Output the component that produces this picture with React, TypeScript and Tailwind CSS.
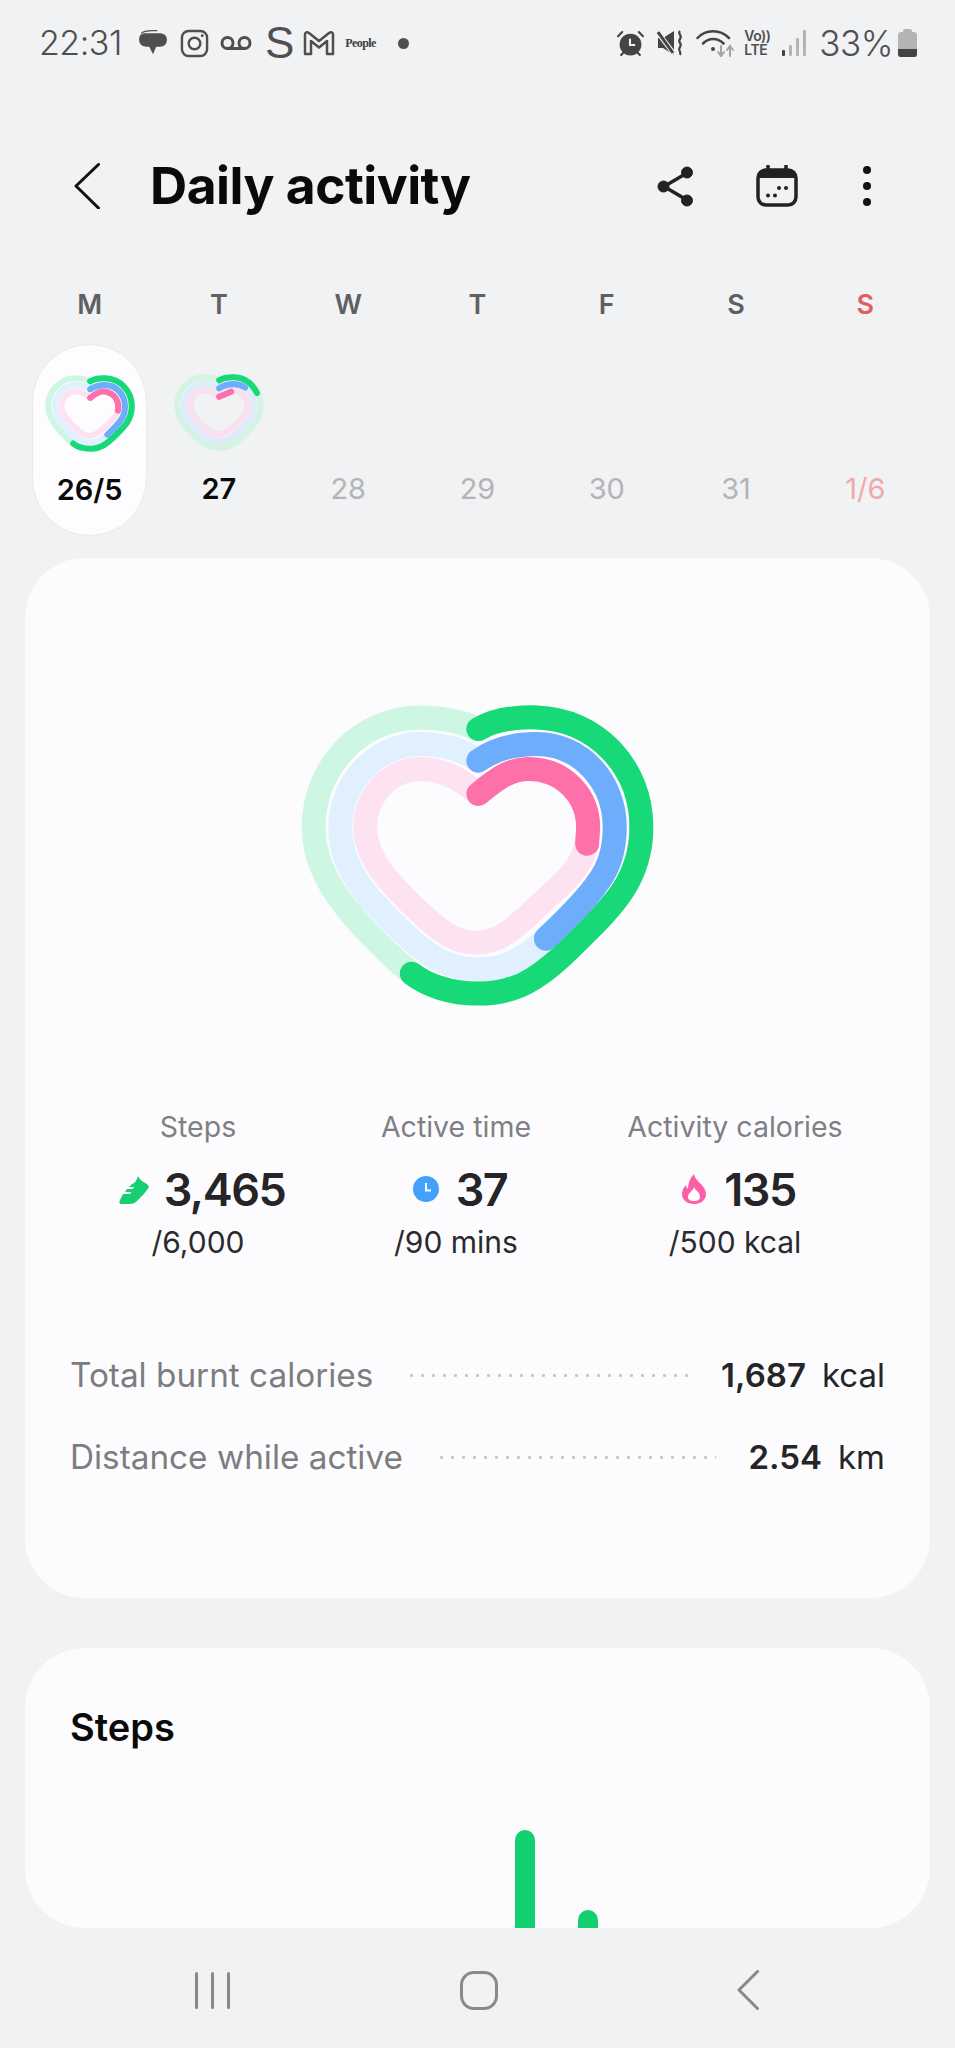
const INTER = "font-['Inter','Noto_Sans',sans-serif]";

const GREEN_TRACK =
  "M595 150C650 118 710 113 770 115C950 120 1085 265 1085 445C1085 520 1065 580 1028 637C990 695 930 750 875 805C840 840 800 875 760 900C710 932 650 945 595 945C510 945 440 920 395 885C340 840 270 770 225 720C165 650 100 560 100 445C100 265 240 115 420 115C480 115 540 125 595 150";
const BLUE_TRACK =
  "M595 245C650 205 710 195 770 195C905 195 1005 310 1005 445C1005 520 985 570 955 610C915 670 850 730 798 780C730 845 670 872 595 872C510 872 450 835 395 785C350 745 310 705 270 660C215 590 180 530 180 445C180 310 290 195 420 195C490 195 545 210 595 245";
const PINK_TRACK =
  "M595 345C650 300 690 270 745 270C850 270 925 350 925 445C925 495 915 530 890 565C860 610 800 655 745 710C690 760 650 792 590 792C530 792 490 765 440 720C395 680 365 650 335 615C290 565 255 510 255 445C255 350 330 270 420 270C490 270 540 300 595 345";

const FULL = {
  green:
    "M595 150C650 118 710 113 770 115C950 120 1085 265 1085 445C1085 520 1065 580 1028 637C990 695 930 750 875 805C840 840 800 875 760 900C710 932 650 945 595 945C510 945 440 920 395 885",
  blue: "M595 245C650 205 710 195 770 195C905 195 1005 310 1005 445C1005 520 985 570 955 610C915 670 850 730 798 780",
  pink: "M595 345C650 300 690 270 745 270C850 270 925 350 925 445L922 495",
};

const SHORT = {
  green: "M595 150C650 118 710 113 770 115C880 118 980 180 1040 300",
  blue: "M595 245C650 205 710 195 770 195C815 195 860 208 900 235",
  pink: "M595 345L735 285",
};

const Heart = ({
  progress,
  className,
  faded,
}: {
  progress: { green: string; blue: string; pink: string };
  className: string;
  faded?: boolean;
}) => (
  <svg viewBox="50 60 1085 940" className={className} fill="none" strokeLinecap="round" strokeWidth="72">
    <path d={GREEN_TRACK} stroke={faded ? "#d3f3e3" : "#cdf7e3"} />
    <path d={BLUE_TRACK} stroke={faded ? "#dfeafa" : "#e0f0fe"} />
    <path d={PINK_TRACK} stroke={faded ? "#f8e0ee" : "#fde3f2"} />
    <path d={progress.green} stroke="#18d977" />
    <path d={progress.blue} stroke="#6dadfb" />
    <path d={progress.pink} stroke="#fe70a9" />
  </svg>
);

const StatusBar = () => (
  <div className="flex h-[86px] shrink-0 items-center justify-between pl-[39px] pr-[38px] text-[#4f4f52]">
    <div className="flex items-center">
      <span className={`${INTER} w-[83px] text-[34px] font-light leading-none tracking-[-0.5px]`}>22:31</span>
      {/* chat */}
      <svg viewBox="0 0 28 28" className="ml-[16px] h-[30px] w-[30px]" fill="#4f4f52">
        <path d="M7 5h13c4 0 7 2 7 6 0 4.500-3 6.500-6.500 6.500H17l-3 7-3.500-7H8c-4 0-7-2.500-7-6.500C1 7 3 5 7 5z" />
        <path d="M3 5C5 2.500 9 2 18 2.500" stroke="#4f4f52" strokeWidth="1.200" fill="none" />
      </svg>
      {/* instagram */}
      <svg viewBox="0 0 30 30" className="ml-[12px] h-[29px] w-[29px]" fill="none" stroke="#4f4f52" strokeWidth="2.500">
        <rect x="2" y="2" width="26" height="26" rx="7" />
        <circle cx="15" cy="15" r="6" />
        <circle cx="23" cy="7" r="1.500" fill="#4f4f52" stroke="none" />
      </svg>
      {/* voicemail */}
      <svg viewBox="0 0 32 16" className="ml-[11px] h-[16px] w-[32px]" fill="none" stroke="#4f4f52" strokeWidth="3">
        <circle cx="7.500" cy="8" r="5.500" />
        <circle cx="24.500" cy="8" r="5.500" />
        <path d="M7.500 13.500h17" />
      </svg>
      <span className="ml-[13px] font-['Liberation_Sans',sans-serif] text-[44px] leading-none">S</span>
      {/* gmail */}
      <svg viewBox="0 0 32 26" className="ml-[9px] h-[26px] w-[32px]" fill="none" stroke="#4f4f52" strokeWidth="2.500" strokeLinejoin="round">
        <path d="M2 4.500C2 2.500 4 1.500 6 3l10 8 10-8c2-1.500 4-.5 4 1.500V24h-6V11l-8 6.500L8 11v13H2z" />
      </svg>
      <span className="ml-[10px] w-[30px] font-['Liberation_Serif',serif] text-[12px] font-bold leading-none tracking-[-0.6px] text-[#3c3c3f]">People</span>
      <div className="ml-[23px] h-[11px] w-[11px] rounded-full bg-[#4f4f52]" />
    </div>
    <div className="flex items-center">
      {/* alarm */}
      <svg viewBox="0 0 26 26" className="h-[27px] w-[27px]" fill="#444447">
        <circle cx="13" cy="14" r="10.500" />
        <path d="M1 6l4-4M25 6l-4-4M4 24l2-2M22 24l-2-2" stroke="#444447" strokeWidth="2" strokeLinecap="round" />
        <path d="M12.500 8.500v6h5" stroke="#f1f2f4" strokeWidth="2" fill="none" />
      </svg>
      {/* muted vibration */}
      <svg viewBox="0 0 27 26" className="ml-[13px] h-[26px] w-[27px]" fill="#444447">
        <path d="M1 8h5l11-7v24L6 18H1z" />
        <path d="M2 4l15 20" stroke="#f1f2f4" strokeWidth="5" />
        <path d="M1 2l15 21" stroke="#444447" strokeWidth="3" />
        <path d="M23 1c-3 3 3 4 0 8s3 4 0 8 2 4 0 8" stroke="#444447" strokeWidth="2.200" fill="none" />
      </svg>
      {/* wifi */}
      <svg viewBox="0 0 40 28" className="ml-[12px] h-[28px] w-[40px]" fill="none" strokeLinecap="round">
        <path d="M1.500 9C10 0 24 0 33 9" stroke="#444447" strokeWidth="2.500" />
        <path d="M7 14.500c6-6 14.500-6 20.500 0" stroke="#444447" strokeWidth="2.500" />
        <circle cx="17" cy="20" r="2" fill="#444447" />
        <path d="M25 17v9M22 23l3 4 3-4" stroke="#a3a3a6" strokeWidth="2" />
        <path d="M34 27v-9M31 21l3-4 3 4" stroke="#a3a3a6" strokeWidth="2" />
      </svg>
      <div className={`${INTER} ml-[8px] flex w-[27px] flex-col text-[14px] font-semibold leading-[14px] tracking-[-0.5px] text-[#4f4f52]`}>
        <span>Vo))</span>
        <span>LTE</span>
      </div>
      {/* signal */}
      <svg viewBox="0 0 25 26" className="ml-[11px] h-[26px] w-[25px]" fill="#b4b4b6">
        <rect x="0" y="20" width="3" height="6" rx="1" fill="#444447" />
        <rect x="7" y="15" width="3" height="11" rx="1" />
        <rect x="14" y="8" width="3" height="18" rx="1" />
        <rect x="21" y="0" width="3" height="26" rx="1" />
      </svg>
      <span className={`${INTER} ml-[12px] text-[35px] font-light leading-none tracking-[-0.5px]`}>33%</span>
      <div className="ml-[5px] flex h-[28px] w-[19px] flex-col items-center">
        <div className="h-[3px] w-[9px] rounded-t-[2px] bg-[#b4b4b6]" />
        <div className="flex w-full flex-1 flex-col justify-end overflow-hidden rounded-[3px] bg-[#b4b4b6]">
          <div className="h-[8px] bg-[#444447]" />
        </div>
      </div>
    </div>
  </div>
);

const Header = () => (
  <div className="mt-[48px] flex h-[104px] shrink-0 items-center pl-[74px] pr-[84px]">
    <svg viewBox="0 0 26 46" className="h-[46px] w-[26px]" fill="none" stroke="#111" strokeWidth="3" strokeLinecap="round" strokeLinejoin="round">
      <path d="M24.500 1.500L2 23l22.500 22" />
    </svg>
    <h1 className={`${INTER} ml-[50px] text-[51.500px] font-bold leading-none tracking-[-0.5px] text-[#0a0a0a]`}>Daily activity</h1>
    <svg viewBox="0 0 37 41" className="ml-auto h-[41px] w-[37px]" fill="#222" stroke="#222">
      <path d="M30 7L7 20.500 30 34" fill="none" strokeWidth="3.500" />
      <circle cx="30" cy="6.500" r="5.500" />
      <circle cx="6.500" cy="20.500" r="5.500" />
      <circle cx="30" cy="34.500" r="5.500" />
    </svg>
    <svg viewBox="0 0 42 42" className="ml-[62px] h-[42px] w-[42px]">
      <path d="M12 1v6M30 1v6" stroke="#222" strokeWidth="3.500" strokeLinecap="round" />
      <rect x="2" y="5" width="38" height="35" rx="8" fill="none" stroke="#222" strokeWidth="3.500" />
      <path d="M2 13c0-5 3-8 8-8h22c5 0 8 3 8 8z" fill="#222" />
      <circle cx="12" cy="30.500" r="2" fill="#222" />
      <circle cx="19" cy="30.500" r="2" fill="#222" />
      <circle cx="23" cy="23" r="2" fill="#222" />
      <circle cx="30" cy="23" r="2" fill="#222" />
    </svg>
    <div className="ml-[65px] flex h-[40px] w-[8px] flex-col justify-between">
      <div className="h-[8px] w-[8px] rounded-full bg-[#111]" />
      <div className="h-[8px] w-[8px] rounded-full bg-[#111]" />
      <div className="h-[8px] w-[8px] rounded-full bg-[#111]" />
    </div>
  </div>
);

const DAYS = [
  { d: "M", n: "26/5", kind: "selected" },
  { d: "T", n: "27", kind: "active" },
  { d: "W", n: "28", kind: "future" },
  { d: "T", n: "29", kind: "future" },
  { d: "F", n: "30", kind: "future" },
  { d: "S", n: "31", kind: "future" },
  { d: "S", n: "1/6", kind: "sunday" },
];

const Week = () => (
  <div className={`${INTER} mt-[46px] grid shrink-0 grid-cols-7 px-[25px]`}>
    {DAYS.map((day, i) => (
      <div key={i} className="flex flex-col items-center">
        <div className={`flex h-[40px] items-center text-[27px] font-semibold leading-none ${i === 6 ? "text-[#e0605f]" : "text-[#5f5f62]"}`}>
          {day.d}
        </div>
        <div
          className={`mt-[20px] flex h-[192px] w-[115px] flex-col items-center rounded-full pt-[28px] ${
            day.kind === "selected" ? "border border-[#e9e9eb] bg-[#fdfdff]" : ""
          }`}
        >
          <div className="h-[81px] w-[92px]">
            {day.kind === "selected" && <Heart progress={FULL} className="h-[81px] w-[92px]" />}
            {day.kind === "active" && <Heart progress={SHORT} faded className="h-[81px] w-[92px]" />}
          </div>
          <div
            className={`mt-[16px] whitespace-nowrap text-[29px] leading-[40px] ${
              day.kind === "selected" || day.kind === "active"
                ? "font-semibold text-[#0a0a0a]"
                : day.kind === "sunday"
                  ? "text-[#f0a9a8]"
                  : "text-[#b4b4b7]"
            }`}
          >
            {day.n}
          </div>
        </div>
      </div>
    ))}
  </div>
);

const Shoe = () => (
  <svg viewBox="0 0 30 30" className="h-[30px] w-[30px]" fill="#17cf73">
    <path d="M19 2c1 3 5 6 9 8l2 3c-3 5-8 10-12 14-2 2-4 3-7 3H3c-3 0-3-2-2-4l3-6h7l1.500-2H6l2-3h6l1-2H10l3-3c3-1 5-4 6-8z" />
  </svg>
);

const Clock = () => (
  <svg viewBox="0 0 26 26" className="h-[26px] w-[26px]">
    <circle cx="13" cy="13" r="13" fill="#42a1fb" />
    <path d="M13 7v7.500h5" fill="none" stroke="#fff" strokeWidth="2" />
  </svg>
);

const Flame = () => (
  <svg viewBox="0 0 24 30" className="h-[30px] w-[24px]">
    <path d="M12 0c1 5 4 7 7 10 3 3 5 7 5 10 0 6-5 10-12 10S0 26 0 20c0-4 2-7 4-9 0 2 1 3 2 4 0-6 2-11 6-15z" fill="#fb5fa8" />
    <path d="M12 13c1 3 6 5 6 10 0 3-3 4-6 4s-6-1-6-4c0-4 5-6 6-10z" fill="#fff" />
  </svg>
);

const STATS = [
  { label: "Steps", value: "3,465", goal: "/6,000", icon: <Shoe />, gap: "gap-[15px]" },
  { label: "Active time", value: "37", goal: "/90 mins", icon: <Clock />, gap: "gap-[17px]" },
  { label: "Activity calories", value: "135", goal: "/500 kcal", icon: <Flame />, gap: "gap-[18px]" },
];

const Dots = () => (
  <div className="h-[3px] flex-1 bg-[radial-gradient(circle,#c6c6c9_1.3px,transparent_1.7px)] bg-[length:11px_3px]" />
);

const Row = ({ label, value, unit, mt }: { label: string; value: string; unit: string; mt: string }) => (
  <div className={`flex items-center ${mt}`}>
    <span className="text-[33.300px] leading-none text-[#7d7d80]">{label}</span>
    <div className="ml-[33px] mr-[32px] flex flex-1">
      <Dots />
    </div>
    <span className="text-[33px] font-semibold leading-none text-[#252528]">{value}</span>
    <span className="ml-[16px] text-[33px] leading-none text-[#252528]">{unit}</span>
  </div>
);

const SummaryCard = () => (
  <section className={`${INTER} mx-[25px] mt-[22px] flex h-[1040px] shrink-0 flex-col rounded-[60px] bg-[#fcfcfe]`}>
    <div className="mt-[141px] flex justify-center">
      <Heart progress={FULL} className="h-[313px] w-[361px]" />
    </div>
    <div className="ml-[45px] mt-[97px] grid grid-cols-[256px_260px_298px]">
      {STATS.map((s) => (
        <div key={s.label} className="flex flex-col items-center">
          <div className="text-[28.500px] leading-[36px] text-[#808083]">{s.label}</div>
          <div className={`ml-[8px] mt-[16px] flex h-[56px] items-center ${s.gap}`}>
            {s.icon}
            <span className="text-[45px] font-semibold leading-none tracking-[-1.500px] text-[#252528]">{s.value}</span>
          </div>
          <div className="mt-[7px] text-[30px] leading-[36px] text-[#2a2a2d]">{s.goal}</div>
        </div>
      ))}
    </div>
    <div className="mt-[99px] px-[45px]">
      <Row label="Total burnt calories" value="1,687" unit="kcal" mt="" />
      <Row label="Distance while active" value="2.54" unit="km" mt="mt-[49px]" />
    </div>
  </section>
);

const StepsCard = () => (
  <section className={`${INTER} mx-[25px] mt-[50px] flex h-[280px] shrink-0 flex-col rounded-[60px] bg-[#fcfcfe] px-[45px]`}>
    <h2 className="mt-[60px] text-[38px] font-semibold leading-[38px] text-[#0a0a0a]">Steps</h2>
    <div className="mt-auto flex items-end gap-[43px] pl-[445px]">
      <div className="h-[98px] w-[20px] rounded-t-full bg-[#12cf6f]" />
      <div className="h-[18px] w-[20px] rounded-t-full bg-[#12cf6f]" />
    </div>
  </section>
);

const NavBar = () => (
  <div className="flex flex-1 items-center pl-[195px] pt-[4px]">
    <div className="flex w-[35px] gap-[13px]">
      <div className="h-[37px] w-[3px] rounded-full bg-[#89898c]" />
      <div className="h-[37px] w-[3px] rounded-full bg-[#89898c]" />
      <div className="h-[37px] w-[3px] rounded-full bg-[#89898c]" />
    </div>
    <div className="ml-[230px] h-[39px] w-[38px] rounded-[14px] border-[3px] border-[#89898c]" />
    <svg viewBox="0 0 22 40" className="ml-[239px] h-[40px] w-[22px]" fill="none" stroke="#89898c" strokeWidth="3" strokeLinecap="round" strokeLinejoin="round">
      <path d="M20.500 1.500L2 20l18.500 18.500" />
    </svg>
  </div>
);

export default function App() {
  return (
    <div className="flex h-[2048px] w-[955px] flex-col overflow-hidden bg-[#f1f2f4]">
      <StatusBar />
      <Header />
      <Week />
      <SummaryCard />
      <StepsCard />
      <NavBar />
    </div>
  );
}
